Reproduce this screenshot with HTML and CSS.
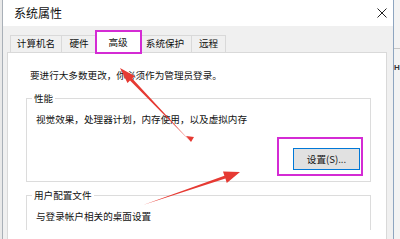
FILE: index.html
```html
<!DOCTYPE html>
<html lang="zh-CN">
<head>
<meta charset="utf-8">
<title>系统属性</title>
<link rel="stylesheet" href="styles.css">
</head>
<body>
<div class="window">
  <div class="titlebar">
    <span class="title">系统属性</span>
    <svg class="close" width="10" height="10" viewBox="0 0 10 10"><path d="M0.5 0.5 L9.5 9.5 M9.5 0.5 L0.5 9.5" stroke="#222" stroke-width="1" fill="none"/></svg>
  </div>
  <div class="body">
    <div class="tabs">
      <div class="tab t1">计算机名</div>
      <div class="tab t2">硬件</div>
      <div class="tab t3 selected">高级</div>
      <div class="tab t4">系统保护</div>
      <div class="tab t5">远程</div>
    </div>
    <div class="panel">
      <p class="intro">要进行大多数更改，你必须作为管理员登录。</p>
      <fieldset class="group g1">
        <legend>性能</legend>
        <p class="desc">视觉效果，处理器计划，内存使用，以及虚拟内存</p>
        <div class="btnrow">
          <span class="btn-wrap"><button class="btn">设置(S)...</button></span>
        </div>
      </fieldset>
      <fieldset class="group g2">
        <legend>用户配置文件</legend>
        <p class="desc">与登录帐户相关的桌面设置</p>
      </fieldset>
    </div>
  </div>
</div>
<div class="side"><span class="side-h">H</span></div>
<svg class="arrows" width="400" height="239" viewBox="0 0 400 239">
  <polygon points="190,141 132.2,78.5 134.7,76 120,68 127.5,83 130,80.5" fill="#e63a33"/>
  <polygon points="186,136 194,137 191,142" fill="#e63a33"/>
  <polygon points="143,205 224.4,175.8 223,171.5 240,172 226.8,182.9 225.4,178.6" fill="#e63a33"/>
</svg>
</body>
</html>
```
FILE: styles.css
```css
html, body {
  margin: 0;
  padding: 0;
  overflow: hidden;
}
body {
  width: 400px;
  height: 239px;
  display: flex;
  background: #e9e9e9;
  position: relative;
  font-family: "Noto Sans CJK SC", "Liberation Sans", sans-serif;
  font-size: 9.6px;
  line-height: 12px;
  color: #111;
}
.window {
  margin-left: 2px;
  width: 390px;
  height: 239px;
  border-left: 1px solid #a9b0b8;
  border-right: 1px solid #8ea5c0;
  display: flex;
  flex-direction: column;
  flex: 0 0 auto;
  overflow: hidden;
}
.titlebar {
  height: 26px;
  background: #fff;
  display: flex;
  align-items: center;
  padding-left: 11px;
  padding-right: 6px;
  flex: 0 0 auto;
}
.title {
  font-size: 12px;
  line-height: 14px;
  flex: 1;
  color: #111;
}
.close {
  display: block;
  margin-top: -1px;
}
.body {
  flex: 1;
  min-height: 0;
  background: #f0f0f0;
  padding: 5px 6px 0 4px;
  display: flex;
  flex-direction: column;
}
.tabs {
  height: 21px;
  flex: 0 0 auto;
  display: flex;
  align-items: flex-end;
  padding-left: 3px;
  position: relative;
  z-index: 2;
}
.tab {
  box-sizing: border-box;
  height: 17px;
  border: 1px solid #d9d9d9;
  border-bottom: none;
  background: #f0f0f0;
  text-align: center;
  padding-top: 1px;
  margin-left: -1px;
  white-space: nowrap;
}
.t1 { width: 52px; margin-left: 0; }
.t2 { width: 36px; }
.t3 { width: 42px; }
.t4 { width: 54px; }
.t5 { width: 35px; }
.tab.selected {
  width: 46px;
  height: 22px;
  margin: 0 -2px -1px -2px;
  background: #fff;
  padding-top: 4px;
  position: relative;
  z-index: 3;
}
.tab.selected::after {
  content: "";
  position: absolute;
  top: -2px;
  left: -1px;
  right: -2px;
  bottom: -1px;
  border: 2px solid #d42bd4;
}
.panel {
  flex: 1;
  min-height: 0;
  overflow: hidden;
  background: #fff;
  border: 1px solid #d9d9d9;
  border-bottom: none;
  padding: 0 15px 0 18px;
  position: relative;
  z-index: 1;
}
.intro {
  margin: 16px 0 0 4px;
}
.group {
  margin: 11px 0 0 0;
  padding: 0;
  border: 1px solid #dcdcdc;
  min-width: 0;
}
.group legend {
  margin-left: 5px;
  padding: 0 2px;
  line-height: 12px;
}
.desc {
  margin: 9px 0 0 9px;
}
.btnrow {
  display: flex;
  justify-content: flex-end;
  padding: 23px 10px 11px 0;
}
.btn-wrap {
  position: relative;
  display: block;
}
.btn-wrap::after {
  content: "";
  position: absolute;
  top: -11px;
  left: -16px;
  right: -3px;
  bottom: -6px;
  border: 2px solid #d42bd4;
}
.btn {
  display: block;
  box-sizing: border-box;
  width: 67px;
  height: 22px;
  background: #e1e1e1;
  border: 1px solid #0078d7;
  font-family: "Noto Sans CJK SC", "Liberation Sans", sans-serif;
  font-size: 9.6px;
  line-height: 12px;
  color: #111;
  padding: 0;
}
.g2 {
  margin-top: 7px;
  height: 40px;
  border-bottom: none;
}
.side {
  flex: 1;
  background: #f3f3f3;
  position: relative;
  overflow: hidden;
}
.side::before {
  content: "";
  display: block;
  height: 48px;
  border-bottom: 1px solid #c8c8c8;
}
.side-h {
  display: block;
  margin-top: 14px;
  margin-left: 0;
  font-family: "Liberation Sans", sans-serif;
  font-weight: bold;
  font-size: 8px;
  line-height: 10px;
  color: #333;
}
.arrows {
  position: absolute;
  top: 0;
  left: 0;
  pointer-events: none;
  z-index: 10;
}
```
